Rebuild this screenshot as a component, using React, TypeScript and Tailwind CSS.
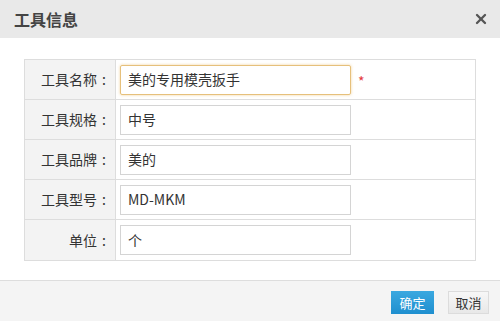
import { X } from 'lucide-react';

const FONT = '"Noto Sans CJK SC", "Noto Sans", sans-serif';

const ROWS = [
  { label: '工具名称', value: '美的专用模壳扳手', focus: true, required: true },
  { label: '工具规格', value: '中号' },
  { label: '工具品牌', value: '美的' },
  { label: '工具型号', value: 'MD-MKM' },
  { label: '单位', value: '个' },
];

export default function App() {
  return (
    <div
      className="flex h-[321px] w-[500px] flex-col overflow-hidden bg-white text-[#333]"
      style={{ fontFamily: FONT }}
    >
      <div className="flex h-[38px] shrink-0 items-center justify-between bg-[#e9e9e9] pl-[14px] pr-[11px]">
        <span className="text-[16px] font-bold leading-none text-[#444]">工具信息</span>
        <X className="h-[16px] w-[16px] text-[#555]" strokeWidth={3.5} />
      </div>

      <div className="px-[24px] pt-[21px]">
        <div className="flex flex-col border border-[#ddd]">
          {ROWS.map((row, i) => (
            <div
              key={row.label}
              className={`flex h-[40px] ${i < ROWS.length - 1 ? 'border-b border-[#ddd]' : 'h-[39px]'}`}
            >
              <div className="flex w-[91px] shrink-0 items-center justify-end border-r border-[#ddd] bg-[#f3f3f3] pr-[4px] text-[14px]">
                <span>{row.label}</span>
                <span className="w-[14px] text-center">:</span>
              </div>
              <div className="flex items-center pl-[4px]">
                <div
                  className={`flex h-[30px] w-[231px] items-center px-[7px] text-[14px] ${
                    row.focus
                      ? 'rounded-[2px] border border-[#e6c07b] shadow-[0_0_3px_rgba(230,180,90,0.6)]'
                      : 'border border-[#d4d4d4]'
                  }`}
                >
                  {row.value}
                </div>
                {row.required && (
                  <span className="ml-[7px] mt-[2px] text-[14px] leading-none text-[#e4393c]">*</span>
                )}
              </div>
            </div>
          ))}
        </div>
      </div>

      <div className="mt-auto flex h-[41px] shrink-0 items-start justify-end gap-[14px] border-t border-[#ddd] bg-[#f4f4f4] pr-[11px] pt-[10px]">
        <button className="flex h-[23px] w-[43px] items-center justify-center bg-gradient-to-b from-[#3aa8e0] to-[#1e8fcf] text-[13px] text-white">
          确定
        </button>
        <button className="flex h-[23px] w-[41px] items-center justify-center border border-[#dcdcdc] bg-gradient-to-b from-[#f7f7f7] to-[#e8e8e8] text-[13px] text-[#333]">
          取消
        </button>
      </div>
    </div>
  );
}
